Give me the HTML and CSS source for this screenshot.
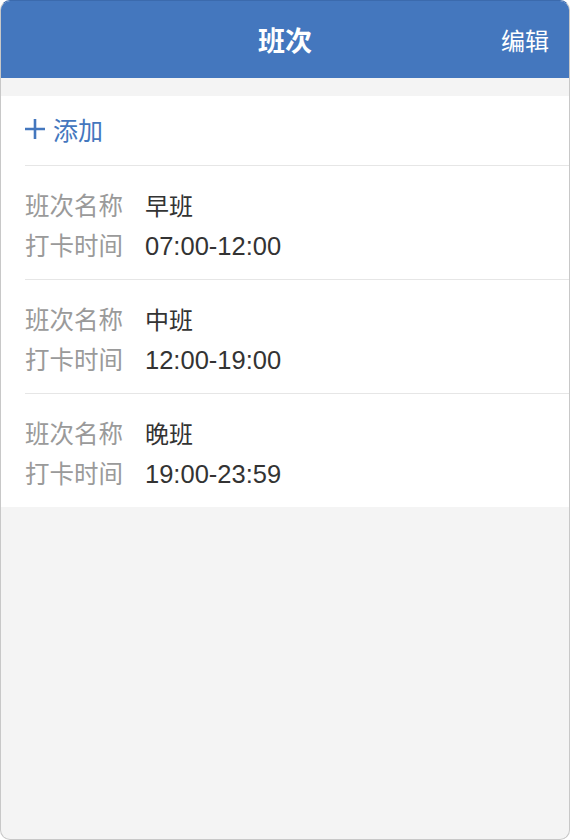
FILE: index.html
```html
<!DOCTYPE html>
<html lang="zh">
<head>
<meta charset="utf-8">
<title>班次</title>
<link rel="stylesheet" href="styles.css">
</head>
<body>
<div class="app">
  <header class="navbar">
    <div class="nav-side"></div>
    <h1 class="nav-title">班次</h1>
    <div class="nav-side nav-right"><span class="nav-action">编辑</span></div>
  </header>
  <main class="content">
    <ul class="list">
      <li class="add-row">
        <svg class="plus" width="20" height="20" viewBox="0 0 20 20"><path d="M10 0v20M0 10h20" stroke="#4477be" stroke-width="2.6" fill="none"/></svg>
        <span class="add-text">添加</span>
      </li>
      <li class="shift">
        <div class="line"><span class="label">班次名称</span><span class="value">早班</span></div>
        <div class="line"><span class="label">打卡时间</span><span class="value num">07:00-12:00</span></div>
      </li>
      <li class="shift">
        <div class="line"><span class="label">班次名称</span><span class="value">中班</span></div>
        <div class="line"><span class="label">打卡时间</span><span class="value num">12:00-19:00</span></div>
      </li>
      <li class="shift">
        <div class="line"><span class="label">班次名称</span><span class="value">晚班</span></div>
        <div class="line"><span class="label">打卡时间</span><span class="value num">19:00-23:59</span></div>
      </li>
    </ul>
  </main>
</div>
</body>
</html>
```

FILE: styles.css
```css
* { box-sizing: border-box; }
html, body { margin: 0; padding: 0; background: #ffffff; }
body {
  font-family: "Liberation Sans", "Noto Sans CJK SC", sans-serif;
}
.app {
  width: 570px;
  height: 840px;
  border: 1px solid #c8c8c8;
  border-top-color: #3b6aad;
  border-radius: 10px;
  overflow: hidden;
  background: #f4f4f4;
  display: flex;
  flex-direction: column;
}
.navbar {
  height: 77px;
  flex: none;
  background: #4477be;
  display: flex;
  align-items: center;
  padding: 0 20px 0 20px;
  color: #ffffff;
}
.nav-side { flex: 1; display: flex; }
.nav-right { justify-content: flex-end; }
.nav-title {
  margin: 0;
  font-family: "Noto Sans CJK SC", sans-serif;
  font-size: 27px;
  font-weight: 700;
  line-height: 1;
}
.nav-action {
  font-family: "Noto Sans CJK SC", sans-serif;
  font-size: 24px;
  line-height: 1;
}
.content {
  flex: 1;
  padding-top: 18px;
}
.list {
  list-style: none;
  margin: 0;
  padding: 0 0 0 24px;
  background: #ffffff;
}
.add-row {
  height: 70px;
  display: flex;
  align-items: center;
  gap: 8px;
  padding-bottom: 3px;
  border-bottom: 1px solid #e6e6e6;
}
.add-text {
  font-family: "Noto Sans CJK SC", sans-serif;
  font-size: 25px;
  color: #4477be;
  line-height: 1;
}
.shift {
  padding: 18px 0 15px 0;
  border-bottom: 1px solid #e6e6e6;
}
.shift:last-child { border-bottom: none; }
.line {
  display: flex;
  align-items: center;
  height: 40px;
}
.label {
  width: 120px;
  font-family: "Noto Sans CJK SC", sans-serif;
  font-size: 24.5px;
  color: #9a9a9a;
  white-space: nowrap;
}
.value {
  font-family: "Noto Sans CJK SC", sans-serif;
  font-size: 24px;
  color: #333333;
}
.value.num {
  font-family: "Liberation Sans", sans-serif;
  font-size: 25.5px;
  padding-top: 4px;
}
```
